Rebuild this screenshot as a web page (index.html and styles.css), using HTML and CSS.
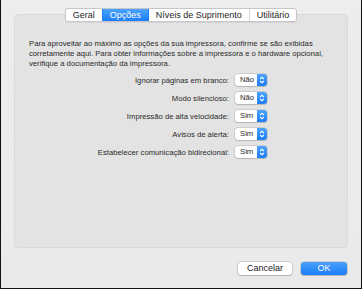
FILE: index.html
```html
<!DOCTYPE html>
<html lang="pt">
<head>
    <meta charset="UTF-8">
    <title>Opções da impressora</title>
    <link rel="stylesheet" href="styles.css">
</head>
<body>
    <div class="window">
        <div class="panel">
            <div class="tabs">
                <span class="tab">Geral</span>
                <span class="tab active">Opções</span>
                <span class="tab">Níveis de Suprimento</span>
                <span class="tab">Utilitário</span>
            </div>
            <p class="intro">Para aproveitar ao máximo as opções da sua impressora, confirme se são exibidas corretamente aqui. Para obter informações sobre a impressora e o hardware opcional, verifique a documentação da impressora.</p>
            <div class="options">
                <label>Ignorar páginas em branco:</label>
                <div class="popup"><span class="value">Não</span><span class="arrows"><svg width="10" height="12" viewBox="0 0 10 12"><path d="M3.2 5 5 3.2 6.8 5M3.2 7 5 8.8 6.8 7" fill="none" stroke="#fff" stroke-width="1.1"/></svg></span></div>
                <label>Modo silencioso:</label>
                <div class="popup"><span class="value">Não</span><span class="arrows"><svg width="10" height="12" viewBox="0 0 10 12"><path d="M3.2 5 5 3.2 6.8 5M3.2 7 5 8.8 6.8 7" fill="none" stroke="#fff" stroke-width="1.1"/></svg></span></div>
                <label>Impressão de alta velocidade:</label>
                <div class="popup"><span class="value">Sim</span><span class="arrows"><svg width="10" height="12" viewBox="0 0 10 12"><path d="M3.2 5 5 3.2 6.8 5M3.2 7 5 8.8 6.8 7" fill="none" stroke="#fff" stroke-width="1.1"/></svg></span></div>
                <label>Avisos de alerta:</label>
                <div class="popup"><span class="value">Sim</span><span class="arrows"><svg width="10" height="12" viewBox="0 0 10 12"><path d="M3.2 5 5 3.2 6.8 5M3.2 7 5 8.8 6.8 7" fill="none" stroke="#fff" stroke-width="1.1"/></svg></span></div>
                <label>Estabelecer comunicação bidirecional:</label>
                <div class="popup"><span class="value">Sim</span><span class="arrows"><svg width="10" height="12" viewBox="0 0 10 12"><path d="M3.2 5 5 3.2 6.8 5M3.2 7 5 8.8 6.8 7" fill="none" stroke="#fff" stroke-width="1.1"/></svg></span></div>
            </div>
        </div>
        <div class="buttons">
            <button class="btn">Cancelar</button>
            <button class="btn primary">OK</button>
        </div>
    </div>
</body>
</html>
```

FILE: styles.css
```css
* {
    box-sizing: border-box;
}
body {
    margin: 0;
    width: 362px;
    height: 289px;
    font-family: 'Liberation Sans', Arial, sans-serif;
    color: #2a2a2a;
    overflow: hidden;
}
.window {
    width: 362px;
    height: 289px;
    background: linear-gradient(#ededed 0%, #ececec 70%, #e8e9eb 100%);
    border-left: 1px solid #111;
    border-right: 1px solid #111;
    border-bottom: 1px solid #111;
    padding: 14px 13px 0 13px;
}
.panel {
    height: 234px;
    background-color: #e3e3e3;
    border: 1px solid #d9d9d9;
    border-radius: 4px;
    padding: 0 14px;
}
.tabs {
    display: flex;
    width: max-content;
    margin: -7px auto 0;
    background-color: #fff;
    border: 1px solid #c6c6c6;
    border-radius: 3px;
    box-shadow: 0 1px 0 rgba(0, 0, 0, 0.06);
    overflow: hidden;
}
.tab {
    font-size: 9px;
    line-height: 12px;
    padding: 0 7px;
    color: #1e1e1e;
    border-left: 1px solid #d4d4d4;
}
.tab:first-child {
    border-left: none;
}
.tab.active {
    background: linear-gradient(#4da3fd, #1b7df7);
    color: #fff;
    border-left-color: #1b7df7;
}
.tab.active + .tab {
    border-left-color: #1b7df7;
}
.intro {
    font-size: 7.7px;
    line-height: 10px;
    margin: 17px 0 0;
}
.options {
    display: grid;
    grid-template-columns: 200px auto;
    column-gap: 6px;
    row-gap: 6px;
    align-items: center;
    margin-top: 5px;
}
.options label {
    font-size: 7.7px;
    text-align: right;
    white-space: nowrap;
}
.popup {
    display: flex;
    width: 32px;
    height: 12px;
    border-radius: 3px;
    background-color: #fff;
    box-shadow: 0 0 0 0.5px rgba(0, 0, 0, 0.2), 0 1px 1px rgba(0, 0, 0, 0.12);
    overflow: hidden;
}
.popup .value {
    flex: 1;
    font-size: 7.7px;
    line-height: 12px;
    padding-left: 5px;
}
.popup .arrows {
    width: 10px;
    height: 12px;
    background: linear-gradient(#4da3fd, #1b7df7);
}
.popup svg {
    display: block;
}
.buttons {
    display: flex;
    justify-content: flex-end;
    gap: 9px;
    margin-top: 14px;
    padding-right: 1px;
}
.btn {
    font-family: 'Liberation Sans', Arial, sans-serif;
    font-size: 9px;
    height: 13px;
    line-height: 11px;
    padding: 0;
    border: none;
    border-radius: 3px;
    color: #222;
    background-color: #fff;
    width: 54px;
    box-shadow: 0 0 0 0.5px rgba(0, 0, 0, 0.25), 0 1px 1px rgba(0, 0, 0, 0.12);
}
.btn.primary {
    width: 46px;
    color: #fff;
    background: linear-gradient(#4ba2fd, #1a7cf7);
}
```
